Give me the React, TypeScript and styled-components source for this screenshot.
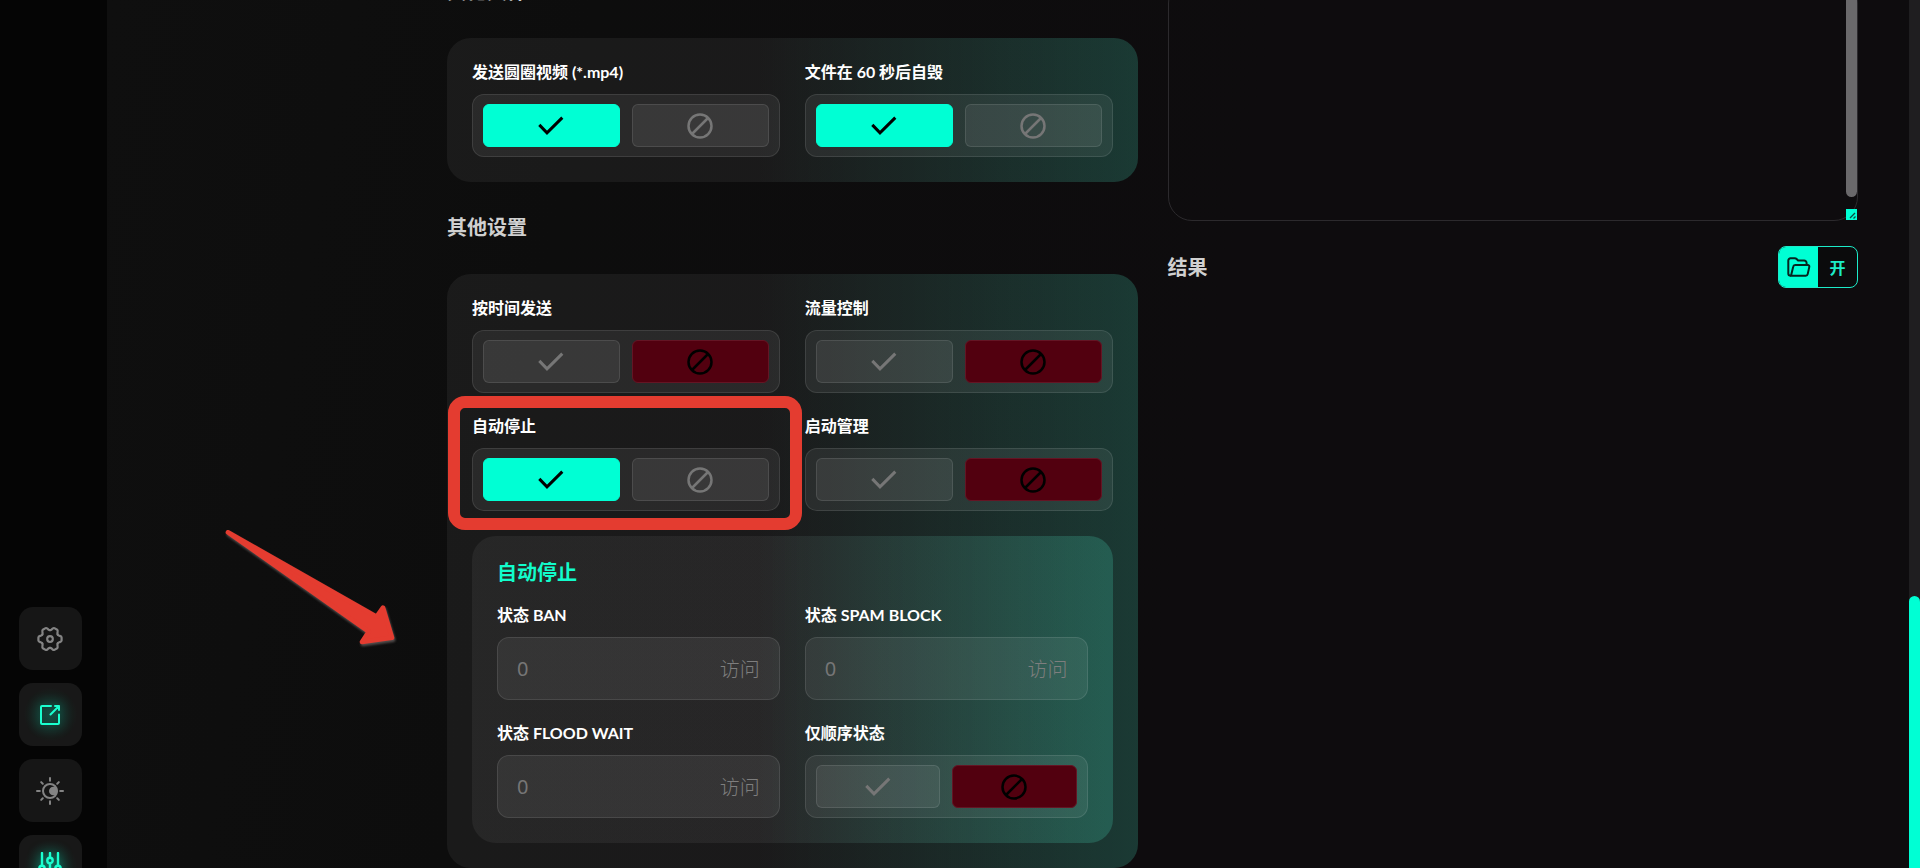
import React, { useId, useState } from "react";
import styled, { createGlobalStyle, css } from "styled-components";

const accent = "#00ffd4";
const glass = "linear-gradient(90deg, rgba(255,255,255,.055) 45%, rgba(80,255,215,.19) 100%)";

const GlobalStyle = createGlobalStyle`
  *, *::before, *::after { box-sizing: border-box; }
  body {
    margin: 0;
    background: #0d0c0e;
    color: #fff;
    font-family: Lato, "Noto Sans CJK SC", sans-serif;
    font-size: 16px;
  }
  button, input, textarea { font-family: inherit; }
`;

const Shell = styled.div`
  display: flex;
  height: 100vh;
  overflow: hidden;
`;

const Sidebar = styled.nav`
  flex: 0 0 107px;
  display: flex;
  flex-direction: column;
  justify-content: flex-end;
  gap: 13px;
  padding-left: 19px;
  margin-bottom: -30px;
  background: #050505;
`;

const NavTile = styled.button<{ $active?: boolean }>`
  display: flex;
  align-items: center;
  justify-content: center;
  flex: none;
  width: 63px;
  height: 63px;
  padding: 0 1px 0 0;
  border: 0;
  border-radius: 14px;
  background: ${(p) => (p.$active ? "radial-gradient(circle, #15352d 0, #181818 60%)" : "#161616")};
  color: ${(p) => (p.$active ? "#1affcf" : "#848484")};
`;

const Main = styled.main`
  position: relative;
  flex: 1;
  min-width: 0;
  padding: 0 51px 0 340px;
  background: linear-gradient(100deg, #0f0f0f 0%, #0d0d0d 25%, #0e0c0e 60%);
`;

const Columns = styled.div`
  display: grid;
  grid-template-columns: minmax(0, 1fr) minmax(0, 1fr);
  gap: 30px;
  margin-top: -21px;
`;

const Column = styled.section`
  display: flex;
  flex-direction: column;
`;

const Heading = styled.h2`
  margin: 0;
  font-size: 20px;
  line-height: 24px;
  font-weight: 700;
  color: #d0d0d0;
`;

const Card = styled.div`
  margin: 35px 0 33px;
  padding: 25px;
  border-radius: 24px;
  background: ${glass};
`;

const SubCard = styled.div`
  margin-top: 25px;
  padding: 25px;
  border-radius: 24px;
  background: ${glass};
`;

const SubTitle = styled.h3`
  margin: 0 0 23px;
  font-size: 20px;
  line-height: 22px;
  font-weight: 700;
  color: #12fccb;
`;

const Fields = styled.div`
  display: grid;
  grid-template-columns: minmax(0, 1fr) minmax(0, 1fr);
  gap: 24px 25px;
`;

const Cell = styled.div`
  position: relative;
  display: flex;
  flex-direction: column;
  gap: 13px;
`;

const labelText = css`
  font-size: 16px;
  line-height: 18px;
  font-weight: 700;
  color: #fff;
`;

const Label = styled.label`
  ${labelText}
`;

const GroupLabel = styled.span`
  ${labelText}
`;

const Box = styled.div`
  display: flex;
  height: 63px;
  border: 1px solid rgba(255, 255, 255, 0.1);
  border-radius: 12px;
  background: rgba(255, 255, 255, 0.065);
`;

const Switch = styled(Box)`
  gap: 12px;
  padding: 9px 10px;
`;

const Choice = styled.button<{ $tone?: "on" | "off" }>`
  display: flex;
  align-items: center;
  justify-content: center;
  flex: 1;
  padding: 0;
  border-radius: 6px;
  border: 1px solid rgba(255, 255, 255, 0.1);
  background: rgba(255, 255, 255, 0.07);
  color: #767676;
  ${(p) => p.$tone === "on" && css`background: ${accent}; border-color: ${accent}; color: #000;`}
  ${(p) => p.$tone === "off" && css`background: #52000f; border-color: #641524; color: #000;`}
`;

const InputBox = styled(Box)`
  align-items: center;
  padding: 0 19px;
`;

const NumberInput = styled.input`
  flex: 1;
  min-width: 0;
  padding: 0;
  border: 0;
  outline: 0;
  background: transparent;
  color: #fff;
  font-family: "Noto Sans", sans-serif;
  font-size: 20px;
  font-weight: 400;
  &::placeholder { color: #767676; opacity: 1; }
`;

const Unit = styled.span`
  font-size: 20px;
  font-weight: 300;
  color: #7e7e7e;
`;

const Marker = styled.div`
  position: absolute;
  inset: -21px -22px -19px -24px;
  border: 12px solid #e43c30;
  border-radius: 17px;
  pointer-events: none;
  z-index: 2;
`;

const Pointer = styled.svg`
  position: absolute;
  left: 116px;
  top: 527px;
  filter: drop-shadow(1px 2px 1px rgba(130, 120, 118, 0.6));
`;

const LogWrap = styled.div`
  position: relative;
  height: 242px;
`;

const Log = styled.textarea`
  display: block;
  width: 100%;
  height: 100%;
  padding: 24px;
  resize: none;
  outline: 0;
  border: 1px solid #2c2a2d;
  border-radius: 24px;
  background: transparent;
  color: #fff;
`;

const LogThumb = styled.div`
  position: absolute;
  top: 0;
  right: 1px;
  width: 11px;
  height: 218px;
  border-radius: 6px;
  background: #6a696b;
`;

const LogGrip = styled.svg`
  position: absolute;
  right: 1px;
  bottom: 1px;
`;

const ResultBar = styled.div`
  display: flex;
  align-items: center;
  justify-content: space-between;
  margin-top: 25px;
`;

const OpenButton = styled.button`
  display: flex;
  width: 80px;
  height: 42px;
  padding: 0;
  overflow: hidden;
  border: 1px solid #1cebc8;
  border-radius: 8px;
  background: #0b0b0c;
  color: #1cebc8;
  font-size: 16px;
  font-weight: 700;
`;

const OpenPart = styled.span<{ $filled?: boolean }>`
  flex: 1;
  height: 100%;
  display: flex;
  align-items: center;
  justify-content: center;
  ${(p) => p.$filled && css`background: ${accent}; color: #06251f;`}
`;

const Rail = styled.div`
  flex: 0 0 11px;
  display: flex;
  align-items: flex-end;
  background: #1f1e20;
`;

const RailThumb = styled.div`
  width: 100%;
  height: 272px;
  border-radius: 6px 6px 0 0;
  background: ${accent};
`;

const Glow = styled.svg`
  filter: drop-shadow(0 0 6px rgba(0, 255, 212, 0.6));
`;

const line = { fill: "none", stroke: "currentColor", strokeWidth: 2 } as const;

const GearIcon = () => (
  <svg width="28" height="28" viewBox="-14 -14 28 28" {...line} strokeWidth="2.200" strokeLinecap="round" strokeLinejoin="round">
    <circle r="2.800" />
    {[0, 60, 120, 180, 240, 300].map((a) => (
      <path key={a} transform={`rotate(${a})`} d="M7.700-4.450C8-3.600 8.700-3.500 9.800-3.100 11.200-2.600 11.600-2.400 11.600-1.600V1.600C11.600 2.400 11.200 2.600 9.800 3.100 8.700 3.500 8 3.600 7.700 4.450" />
    ))}
  </svg>
);

const ExportIcon = () => (
  <Glow width="24" height="24" viewBox="0 0 24 24" {...line} strokeLinecap="round" strokeLinejoin="round">
    <path d="M13 3H4a1 1 0 0 0-1 1v16a1 1 0 0 0 1 1h16a1 1 0 0 0 1-1v-8.500" />
    <path d="M17 3h4v4M21 3l-8.500 8.500" />
  </Glow>
);

const ThemeIcon = () => (
  <svg width="30" height="30" viewBox="-15 -15 30 30" {...line} strokeLinecap="round">
    <circle r="7" />
    <circle cx="3.300" r="4.300" fill="currentColor" stroke="none" />
    {[0, 45, 90, 135, 180, 225, 270, 315].map((a) => (
      <path key={a} transform={`rotate(${a})`} d={a % 90 ? "M0-10.200V-12.500" : "M0-10.200V-13"} />
    ))}
  </svg>
);

const SlidersIcon = () => (
  <Glow width="28" height="30" viewBox="-14 -15 28 30" {...line} strokeWidth="2.400" strokeLinecap="round">
    <path d="M-8-14V-1.500M-8 4.500V14M0-14V-9.500M0-3.500V14M8-14V-1.500M8 4.500V14" />
    <circle cx="-8" cy="1.500" r="2.700" />
    <circle cx="0" cy="-6.500" r="2.700" />
    <circle cx="8" cy="1.500" r="2.700" />
  </Glow>
);

const CheckIcon = () => (
  <svg width="28" height="28" viewBox="0 0 28 28" {...line} strokeWidth="3">
    <path d="M2.300 12.900 10 20.800 25.300 5.600" />
  </svg>
);

const BanIcon = () => (
  <svg width="28" height="28" viewBox="-14 -14 28 28" {...line} strokeWidth="2.500">
    <circle r="11.500" />
    <path d="M-8 8 8-8" />
  </svg>
);

const FolderIcon = () => (
  <svg width="26" height="24" viewBox="0 0 26 24" {...line} strokeLinejoin="round">
    <path d="M5 20.700C3 20.700 2.300 20 2.300 18.500V5.500a2.200 2.200 0 0 1 2.200-2.200h4.200c1 0 1.600.4 2.200 1l1.200 1.200h6a2.500 2.500 0 0 1 2.500 2.500V10" />
    <path d="M9.200 10h12.600a1.500 1.500 0 0 1 1.500 1.900l-1.600 7.200a2 2 0 0 1-2 1.600H5l2.200-9a2 2 0 0 1 2-1.700z" />
  </svg>
);

function ToggleField({ label, initial, marked }: { label: string; initial: boolean; marked?: boolean }) {
  const id = useId();
  const [on, setOn] = useState(initial);
  return (
    <Cell>
      <GroupLabel id={id}>{label}</GroupLabel>
      <Switch role="group" aria-labelledby={id}>
        <Choice type="button" aria-label="✓" aria-pressed={on} $tone={on ? "on" : undefined} onClick={() => setOn(true)}>
          <CheckIcon />
        </Choice>
        <Choice type="button" aria-label="⊘" aria-pressed={!on} $tone={on ? undefined : "off"} onClick={() => setOn(false)}>
          <BanIcon />
        </Choice>
      </Switch>
      {marked && <Marker />}
    </Cell>
  );
}

function NumberField({ label }: { label: string }) {
  const id = useId();
  return (
    <Cell>
      <Label htmlFor={id}>{label}</Label>
      <InputBox>
        <NumberInput id={id} inputMode="numeric" placeholder="0" />
        <Unit>访问</Unit>
      </InputBox>
    </Cell>
  );
}

export default function App() {
  return (
    <>
      <GlobalStyle />
      <Shell>
        <Sidebar>
          <NavTile type="button"><GearIcon /></NavTile>
          <NavTile type="button" $active><ExportIcon /></NavTile>
          <NavTile type="button"><ThemeIcon /></NavTile>
          <NavTile type="button" $active><SlidersIcon /></NavTile>
        </Sidebar>
        <Main>
          <Columns>
            <Column>
              <Heading>其他文件</Heading>
              <Card>
                <Fields>
                  <ToggleField label="发送圆圈视频 (*.mp4)" initial />
                  <ToggleField label="文件在 60 秒后自毁" initial />
                </Fields>
              </Card>
              <Heading>其他设置</Heading>
              <Card>
                <Fields>
                  <ToggleField label="按时间发送" initial={false} />
                  <ToggleField label="流量控制" initial={false} />
                  <ToggleField label="自动停止" initial marked />
                  <ToggleField label="启动管理" initial={false} />
                </Fields>
                <SubCard>
                  <SubTitle>自动停止</SubTitle>
                  <Fields>
                    <NumberField label="状态 BAN" />
                    <NumberField label="状态 SPAM BLOCK" />
                    <NumberField label="状态 FLOOD WAIT" />
                    <ToggleField label="仅顺序状态" initial={false} />
                  </Fields>
                </SubCard>
              </Card>
            </Column>
            <Column>
              <LogWrap>
                <Log aria-labelledby="result-title" />
                <LogThumb />
                <LogGrip width="11" height="11" viewBox="0 0 11 11">
                  <path d="M0 0h11v11H0z" fill={accent} />
                  <path d="M4 9 9 4M7.500 9.500l2-2" stroke="#0a4a40" strokeWidth="1.300" />
                </LogGrip>
              </LogWrap>
              <ResultBar>
                <Heading id="result-title">结果</Heading>
                <OpenButton type="button">
                  <OpenPart $filled><FolderIcon /></OpenPart>
                  <OpenPart>开</OpenPart>
                </OpenButton>
              </ResultBar>
            </Column>
          </Columns>
          <Pointer width="176" height="123" viewBox="70 80 528 369" aria-hidden="true">
            <path
              d="M85 96 531 349 550 322 577 412 487 425 507 394Z"
              fill="#e43c30"
              stroke="#e43c30"
              strokeWidth="14"
              strokeLinejoin="round"
            />
          </Pointer>
        </Main>
        <Rail><RailThumb /></Rail>
      </Shell>
    </>
  );
}
